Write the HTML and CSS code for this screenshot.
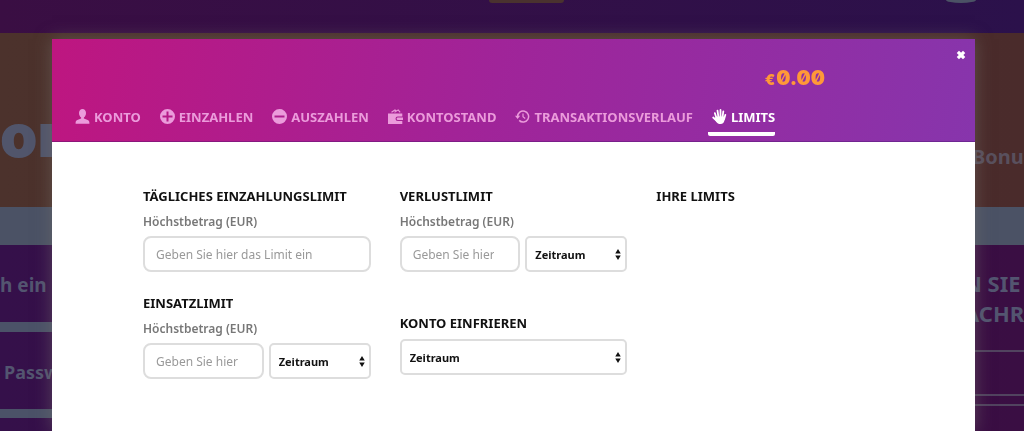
FILE: index.html
```html
<!DOCTYPE html>
<html lang="de">
<head>
  <meta charset="UTF-8" />
  <meta name="viewport" content="width=device-width, initial-scale=1.0"/>
  <title>Limits</title>
  <link rel="stylesheet" href="styles.css">
</head>
<body>
<div class="page">
  <div class="topbar">
    <span class="topbar-badge"></span>
    <span class="topbar-avatar"></span>
  </div>
  <div class="hero">
    <div class="side hero-title">or</div>
    <div class="side hero-bonus">Bonu</div>
  </div>
  <div class="strip"></div>
  <div class="lower">
    <div class="side login">
      <div class="login-title">h ein</div>
      <div class="login-row">Passw</div>
    </div>
    <div class="side news">
      <div class="news-title">N SIE<br>ACHR</div>
      <div class="news-row"></div>
      <div class="news-row news-row-last"></div>
    </div>
  </div>
</div>

<div class="modal" role="dialog" aria-label="Limits">
  <header class="modal-header">
    <button class="close" type="button" aria-label="Schließen">
      <svg viewBox="0 0 10 10" width="10" height="10"><path d="M3 3 7 7M7 3 3 7" stroke="#fff" stroke-width="3.2" stroke-linecap="square"/></svg>
    </button>
    <div class="balance"><span class="currency">€</span>0.00</div>
    <nav class="tabs">
      <a class="tab" href="#konto">
        <svg viewBox="0 0 15 15"><path d="M7.500 0C5.300 0 4 1.700 4 4c0 1.900.8 3.600 2.100 4.400v1.100L2.300 11C1 11.500.6 12.700.6 14v.8h13.800V14c0-1.300-.4-2.500-1.700-3L8.900 9.500V8.400C10.200 7.600 11 5.900 11 4c0-2.300-1.300-4-3.500-4z"/></svg>
        KONTO
      </a>
      <a class="tab" href="#einzahlen">
        <svg viewBox="0 0 15 15"><path fill-rule="evenodd" d="M7.500 0a7.500 7.500 0 1 0 0 15 7.500 7.500 0 0 0 0-15zM6.500 2.500h2v4h4v2h-4v4h-2v-4h-4v-2h4z"/></svg>
        EINZAHLEN
      </a>
      <a class="tab" href="#auszahlen">
        <svg viewBox="0 0 15 15"><path fill-rule="evenodd" d="M7.500 0a7.500 7.500 0 1 0 0 15 7.500 7.500 0 0 0 0-15zM2.500 6.500h10v2h-10z"/></svg>
        AUSZAHLEN
      </a>
      <a class="tab" href="#kontostand">
        <svg viewBox="0 0 15 15"><path d="M0 4.500h14.300v2.900H9.800a2.200 2.200 0 0 0 0 4.600h4.500v3H0z"/><path d="M10 8.400h5v2.700h-5a1.300 1.300 0 0 1 0-2.700z"/><path d="M3.500 3.300 7 1l1.600 1.200M6.500 3.300 10.200.9l2 2.400" fill="none" stroke="currentColor" stroke-width="1.100"/></svg>
        KONTOSTAND
      </a>
      <a class="tab" href="#verlauf">
        <svg viewBox="0 0 15 15"><path d="M2.600 7.500a5.500 5.500 0 1 1 1.600 3.900" fill="none" stroke="currentColor" stroke-width="1.500"/><path d="M0 6.700h5.200L2.600 10z"/><path d="M8 4.500v3.300l2.200 1.700" fill="none" stroke="currentColor" stroke-width="1.200"/></svg>
        TRANSAKTIONSVERLAUF
      </a>
      <a class="tab active" href="#limits" aria-current="page">
        <svg viewBox="0 0 15 15"><path d="M4.600 9.500 2.900 4.200M6.400 8 5.500 1.700M8.500 8V1M10.500 8.500l.8-6.200M12 10.500l1.300-4.600M5 12 1.200 8.500" fill="none" stroke="currentColor" stroke-width="1.800" stroke-linecap="round"/><path d="M3.900 7.500h8.700l-.3 4.300c-.2 1.800-1.500 3.200-3.700 3.200-2.100 0-3.400-.8-4.400-2.300L2.500 10z"/></svg>
        LIMITS
      </a>
    </nav>
  </header>

  <form class="limits">
    <div class="column">
      <section>
        <h2>TÄGLICHES EINZAHLUNGSLIMIT</h2>
        <label for="deposit">Höchstbetrag (EUR)</label>
        <div class="fields"><input type="text" id="deposit" placeholder="Geben Sie hier das Limit ein"/></div>
      </section>
      <section>
        <h2>EINSATZLIMIT</h2>
        <label for="stake">Höchstbetrag (EUR)</label>
        <div class="fields">
          <input type="text" id="stake" placeholder="Geben Sie hier das Limit ein"/>
          <select class="short" aria-label="Zeitraum Einsatzlimit"><option>Zeitraum</option></select>
        </div>
      </section>
    </div>
    <div class="column column-wide">
      <section>
        <h2>VERLUSTLIMIT</h2>
        <label for="loss">Höchstbetrag (EUR)</label>
        <div class="fields">
          <input type="text" id="loss" placeholder="Geben Sie hier das Limit ein"/>
          <select class="short" aria-label="Zeitraum Verlustlimit"><option>Zeitraum</option></select>
        </div>
      </section>
      <section>
        <h2><label class="heading-label" for="freeze">KONTO EINFRIEREN</label></h2>
        <div class="fields"><select id="freeze"><option>Zeitraum</option></select></div>
      </section>
    </div>
    <div class="column">
      <h2>IHRE LIMITS</h2>
    </div>
  </form>
</div>
</body>
</html>
```
FILE: styles.css
```css
* { box-sizing: border-box; margin: 0; padding: 0; }

body {
  font-family: "Noto Sans", "Open Sans", sans-serif;
  background: #35104a;
  color: #111;
  overflow: hidden;
}

/* dimmed page behind the dialog */
.page {
  min-height: 100vh;
  display: flex;
  flex-direction: column;
  color: #535570;
  font-weight: 700;
}

.topbar {
  height: 33px;
  display: grid;
  grid-template-columns: 1fr 75px 1fr;
  background: linear-gradient(90deg, #3a0e43, #2b114b);
}

.topbar-badge {
  grid-column: 2;
  height: 3px;
  margin-left: 14px;
  margin-right: -14px;
  background: #4a322f;
  border-radius: 0 0 3px 3px;
}

.topbar-avatar {
  justify-self: end;
  width: 30px;
  height: 3px;
  margin-right: 48px;
  background: #4b5265;
  border-radius: 0 0 50% 50% / 0 0 100% 100%;
}

.hero {
  height: 174px;
  display: flex;
  justify-content: space-between;
  background: linear-gradient(90deg, #4c322c, #4a2b2b);
}

.side {
  white-space: nowrap;
}

.hero-title {
  width: 80px;
  padding-top: 72px;
  font-family: Inter, sans-serif;
  font-size: 60px;
  line-height: 60px;
  font-weight: 900;
  color: #51556b;
}

.hero-bonus {
  width: 52px;
  padding-top: 112px;
  font-size: 20px;
  line-height: 24px;
  color: #59505d;
}

.strip {
  height: 38px;
  background: #4b5265;
}

.lower {
  flex: 1;
  display: flex;
  justify-content: space-between;
  background: linear-gradient(90deg, #35104a, #3a0e43);
}

.login {
  width: 80px;
  font-size: 19px;
}

.login-title {
  height: 77px;
  padding-top: 28px;
  line-height: 24px;
}

.login-row {
  height: 96px;
  padding: 28px 0 0 4px;
  border-top: 10px solid #4b5268;
  border-bottom: 9px solid #4b5268;
  font-size: 18px;
  line-height: 24px;
}

.news {
  width: 60px;
}

.news-title {
  padding-top: 23px;
  font-size: 22px;
  line-height: 30px;
}

.news-row {
  height: 46px;
  margin-top: 22px;
  border-top: 2px solid #51435f;
  border-bottom: 2px solid #51435f;
}

.news-row-last {
  margin-top: 8px;
}

.modal {
  position: fixed;
  top: 39px;
  left: 52px;
  right: 49px;
  bottom: 0;
  background: #fff;
  box-shadow: 0 0 16px rgba(120, 115, 110, 0.5);
}

.modal-header {
  padding: 27px 24px 5px 19px;
  background: linear-gradient(100deg, #be1680, #a02499 48%, #8735ac);
  border-bottom: 1px solid rgba(70, 20, 110, 0.4);
}

.close {
  position: absolute;
  top: 11px;
  right: 9px;
  width: 10px;
  height: 10px;
  border: none;
  background: none;
  cursor: pointer;
}

.close svg {
  display: block;
}

.balance {
  padding-right: 126px;
  font-family: Inter, sans-serif;
  font-feature-settings: "zero";
  font-size: 20px;
  line-height: 24px;
  font-weight: 900;
  text-align: right;
  color: #ff9838;
}

.currency {
  margin-right: 1px;
  font-size: 15px;
}

.tabs {
  display: flex;
  gap: 15px;
  margin-top: 13px;
}

.tab {
  display: flex;
  align-items: center;
  gap: 4px;
  height: 31px;
  padding-left: 4px;
  padding-bottom: 4px;
  border-bottom: 4px solid transparent;
  font-size: 13px;
  font-weight: 700;
  color: #eb9bdb;
  text-decoration: none;
  white-space: nowrap;
}

.tab svg {
  width: 15px;
  height: 15px;
  flex: none;
  fill: currentColor;
}

.tab.active {
  color: #fff;
  border-bottom-color: #fff;
  border-radius: 2px;
}

.limits {
  display: grid;
  grid-template-columns: repeat(3, minmax(0, 1fr));
  gap: 29px;
  padding: 44px 91px 52px;
}

.column {
  display: flex;
  flex-direction: column;
  gap: 21px;
}

.column-wide {
  gap: 41px;
}

h2 {
  font-size: 13px;
  line-height: 20px;
  font-weight: 700;
  white-space: nowrap;
}

.limits label {
  display: block;
  margin-top: 8px;
  font-size: 12px;
  line-height: 16px;
  font-weight: 600;
  color: #777;
}

.limits .heading-label {
  margin: 0;
  font-size: 13px;
  line-height: 20px;
  font-weight: 700;
  color: #111;
}

.fields {
  display: flex;
  gap: 5px;
  margin-top: 6px;
}

.fields input, .fields select {
  flex: 1;
  min-width: 0;
  height: 36px;
  border: 2px solid #ddd;
  background: #fff;
  font-family: inherit;
  font-size: 12px;
}

.fields input {
  padding: 0 24px 0 11px;
  border-radius: 8px;
}

.fields input::placeholder {
  color: #999;
}

.fields select {
  appearance: none;
  padding: 0 20px 0 8px;
  border-radius: 5px;
  background: #fff url("data:image/svg+xml,%3Csvg xmlns='http://www.w3.org/2000/svg' viewBox='0 0 6 12'%3E%3Cpath d='M3 0 6 5H0zM3 12 0 7h6z' fill='%23111'/%3E%3C/svg%3E") no-repeat right 4px center / 6px 11px;
  color: #111;
  font-size: 11px;
  font-weight: 700;
}

.fields .short {
  flex: 0 0 102px;
}
```
